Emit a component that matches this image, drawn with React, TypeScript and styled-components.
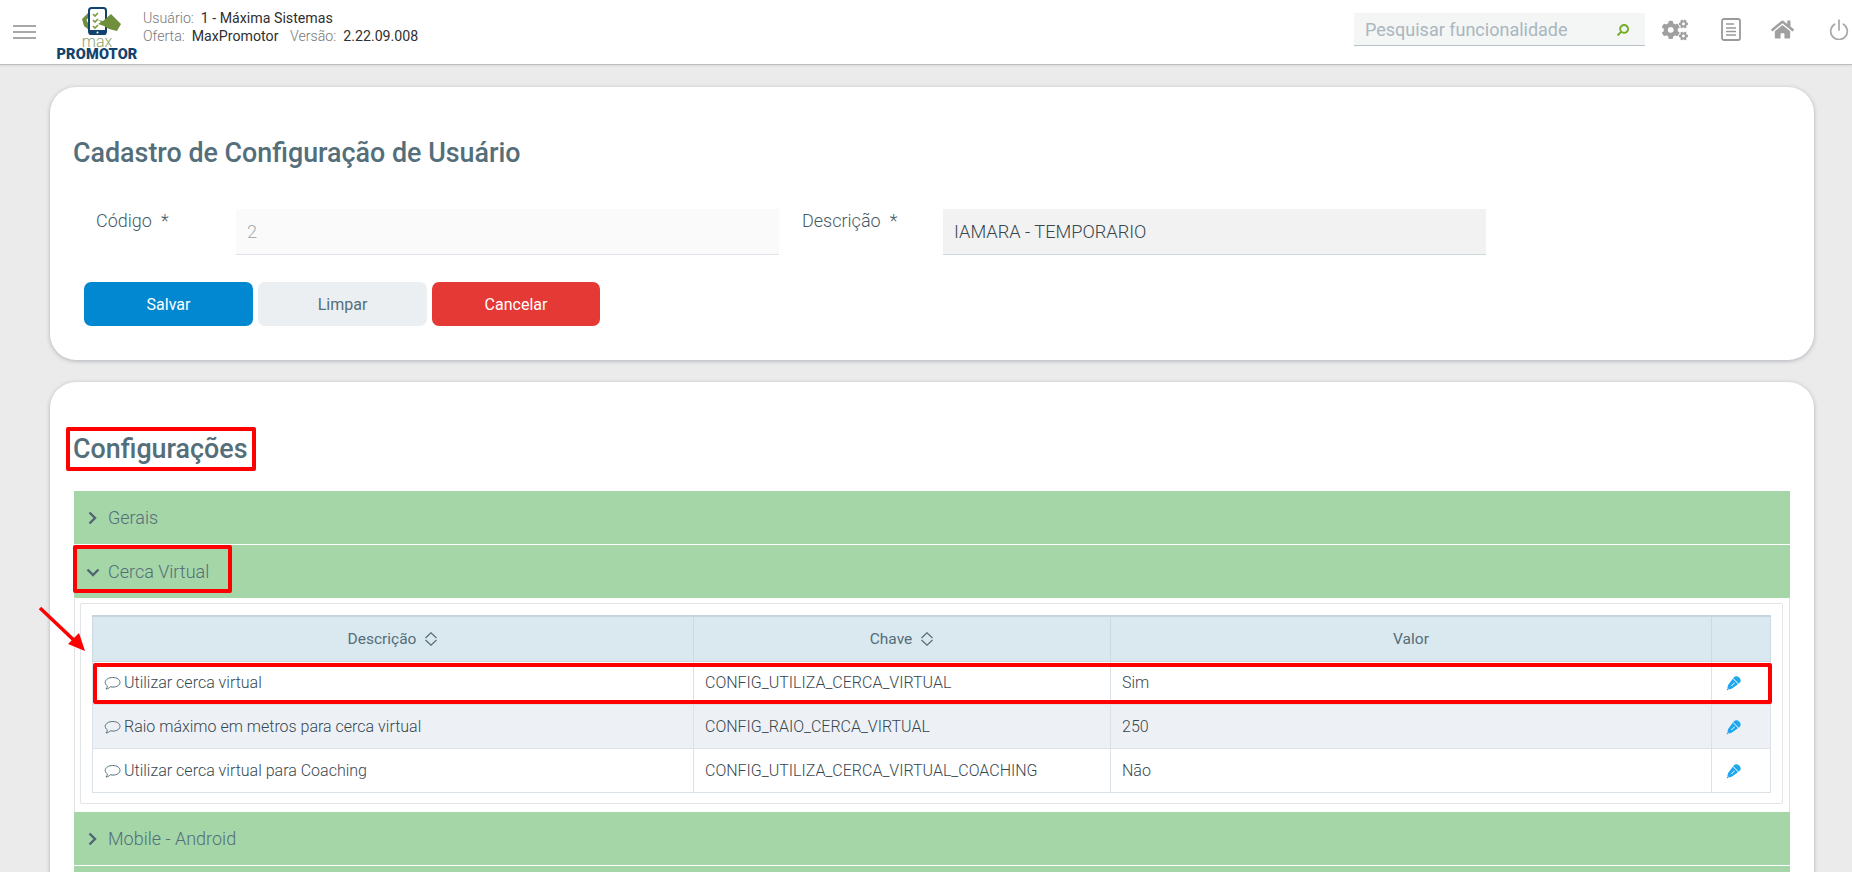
import React from "react";
import styled, { createGlobalStyle } from "styled-components";
import { FaCogs, FaHome, FaSearch } from "react-icons/fa";

const Global = createGlobalStyle`
  html, body { margin: 0; padding: 0; height: 872px; overflow: hidden; background: #ebebeb; }
  body { font-family: Roboto, "Liberation Sans", sans-serif; }
  * { box-sizing: border-box; }
`;

const Page = styled.div`
  position: relative;
  width: 1852px;
  height: 872px;
  overflow: hidden;
`;

const Topbar = styled.header`
  display: flex;
  align-items: center;
  height: 65px;
  background: #fff;
  border-bottom: 1px solid #bdbdbd;
  box-shadow: 0 1px 2px rgba(0, 0, 0, 0.08);
`;

const Burger = styled.div`
  display: flex;
  flex-direction: column;
  gap: 4px;
  width: 23px;
  margin-left: 13px;
  span { display: block; height: 2px; background: #a8a8a8; }
`;

const LogoBox = styled.div`
  display: flex;
  flex-direction: column;
  align-items: center;
  width: 82px;
  margin-left: 20px;
  height: 60px;
  padding-top: 5px;
  svg { margin-left: 8px; }
`;

const LogoMax = styled.span`
  font-size: 16px;
  line-height: 11px;
  font-weight: 300;
  color: #8fa36b;
  margin-top: 0;
`;

const LogoName = styled.span`
  font-size: 14.5px;
  line-height: 13px;
  font-weight: 900;
  letter-spacing: 0.2px;
  color: #12436d;
  margin-top: 1px;
`;

const UserInfo = styled.div`
  margin-left: 5px;
  font-size: 14.2px;
  line-height: 18px;
  color: #777;
  font-weight: 300;
  margin-top: -11px;
  b { font-weight: 400; color: #2f2f2f; margin-left: 3.5px; margin-right: 8px; }
`;

const Spacer = styled.div`
  flex: 1;
`;

const Search = styled.div`
  display: flex;
  align-items: center;
  justify-content: space-between;
  width: 291px;
  height: 33px;
  margin-top: -6px;
  padding: 2px 16px 0 11px;
  background: #f4f5f5;
  border-bottom: 1px solid #b4c2ca;
  font-size: 18px;
  color: #a9b7bf;
  svg { color: #74ad27; transform: scaleX(-1); }
`;

const TopIcons = styled.div`
  display: flex;
  align-items: center;
  margin-top: -5px;
  color: #a0a0a0;
`;

const IconSlot = styled.div<{ $w: number; $ml: number }>`
  display: flex;
  justify-content: center;
  width: ${(p) => p.$w}px;
  margin-left: ${(p) => p.$ml}px;
`;

const Main = styled.main`
  display: flex;
  flex-direction: column;
  gap: 22px;
  padding: 22px 38px 0 50px;
`;

const Card = styled.section`
  background: #fff;
  border-radius: 26px;
  box-shadow: 0 1px 4px rgba(60, 70, 90, 0.35);
`;

const FormCard = styled(Card)`
  height: 273px;
  padding: 51px 23px 0;
`;

const ConfigCard = styled(Card)`
  height: 600px;
  padding: 52px 24px 0 23px;
`;

const Title = styled.h2`
  margin: 0;
  font-size: 26.85px;
  line-height: 30px;
  font-weight: 500;
  color: #546e7a;
`;

const FormRow = styled.div`
  display: flex;
  margin-top: 41px;
`;

const Label = styled.label<{ $w: number }>`
  width: ${(p) => p.$w}px;
  padding-left: ${(p) => (p.$w > 150 ? 23 : 0)}px;
  padding-top: 1px;
  font-size: 18px;
  line-height: 22px;
  font-weight: 300;
  color: #455a64;
  span { margin-left: 9px; }
`;

const Input = styled.div<{ $disabled?: boolean }>`
  display: flex;
  align-items: center;
  width: 543px;
  height: 46px;
  padding: 0 11px;
  font-size: 18.2px;
  font-weight: 300;
  background: ${(p) => (p.$disabled ? "#fafafa" : "#f2f2f2")};
  border-bottom: 1px solid ${(p) => (p.$disabled ? "#dde3e8" : "#cfd8dc")};
  color: ${(p) => (p.$disabled ? "#a4adb2" : "#37474f")};
`;

const FieldGap = styled.div`
  width: 23px;
`;

const Buttons = styled.div`
  display: flex;
  gap: 5px;
  margin-top: 27px;
  margin-left: 11px;
`;

const Btn = styled.button<{ $bg: string; $fg: string }>`
  width: 169px;
  height: 44px;
  border: 0;
  border-radius: 7px;
  font: 400 16px Roboto, sans-serif;
  background: ${(p) => p.$bg};
  color: ${(p) => p.$fg};
  &:last-child { width: 168px; }
`;

const Accordion = styled.div`
  margin: 27px 0 0 1px;
  width: 1716px;
`;

const AccHeader = styled.div`
  display: flex;
  align-items: center;
  height: 53px;
  margin-bottom: 1px;
  padding-left: 12px;
  background: #a5d6a7;
  font-size: 18px;
  font-weight: 300;
  color: #546e7a;
  svg { margin-right: 8px; flex: none; }
`;

const AccContent = styled.div`
  margin-top: -2px;
  padding: 6px 6px 8px 5px;
  border-left: 1px solid #e2e2e2;
  border-right: 1px solid #e2e2e2;
`;

const TableBox = styled.div`
  padding: 11px 11px 10px;
  border: 1px solid #e2e5e7;
  border-radius: 2px;
`;

const Table = styled.table`
  width: 100%;
  table-layout: fixed;
  border-collapse: collapse;
  font-size: 16px;
  font-weight: 300;
`;

const Th = styled.th`
  height: 45px;
  padding: 0;
  background: #dae8ef;
  border: 1px solid #cbd9e1;
  border-top: 2px solid #c5d5de;
  font-size: 15.5px;
  font-weight: 400;
  color: #546e7a;
  text-align: center;
  svg { margin-left: 8px; vertical-align: -2px; }
`;

const Tr = styled.tr<{ $alt?: boolean }>`
  background: ${(p) => (p.$alt ? "#edf1f6" : "#fff")};
  &:last-child td { height: 44.5px; }
`;

const Td = styled.td`
  height: 43.6px;
  padding: 0 11px;
  border: 1px solid #dbe3e8;
  color: #37474f;
  white-space: nowrap;
  svg { vertical-align: -3px; }
`;

const ActionTd = styled(Td)`
  padding: 0 14px;
`;

const Box = styled.div`
  position: absolute;
  border: 4px solid #f00;
  border-radius: 2px;
  pointer-events: none;
`;

const ConfigMark = styled(Box)`
  left: 66px; top: 427px; width: 190px; height: 44px;
`;
const CercaMark = styled(Box)`
  left: 73px; top: 545px; width: 159px; height: 48px;
`;
const RowMark = styled(Box)`
  left: 93px; top: 663px; width: 1679px; height: 41px;
`;
const ArrowLayer = styled.svg`
  position: absolute;
  left: 36px; top: 604px;
`;

const Chevron = ({ open }: { open?: boolean }) => (
  <svg width="14" height="14" viewBox="0 0 14 14" fill="none" stroke="#4f6672" strokeWidth="2.4">
    {open ? <path d="M1.5 4.500 7 10l5.500-5.500" /> : <path d="M3.500 1.500 9 7l-5.500 5.500" />}
  </svg>
);

const Sort = () => (
  <svg width="14" height="14" viewBox="0 0 14 14" fill="none" stroke="#546e7a" strokeWidth="1.2">
    <path d="M1.5 6 7 .8 12.5 6M1.5 8 7 13.2 12.5 8" />
  </svg>
);

const Bubble = () => (
  <svg width="17" height="15" viewBox="0 0 17 15" fill="none" stroke="#546e7a" strokeWidth="1" style={{ marginRight: 3 }}>
    <path d="M8.8 1.5c4 0 7.2 2 7.2 4.8s-3.200 4.800-7.200 4.800c-.9 0-1.700-.1-2.500-.3-1 1.200-2.500 2-4.300 2.200.8-.8 1.300-1.800 1.400-3C2.100 9 1.200 7.700 1.200 6.300c0-2.800 3.600-4.800 7.600-4.800Z" />
  </svg>
);

const Pencil = () => (
  <svg width="15" height="15" viewBox="0 0 15 15">
    <path d="M7.500 1.700A4 4 0 0 1 13.300 7.300L6 12.500.6 14.400 2.300 8.800Z" fill="#1ea7ef" />
    <path d="M7 2.500 12.500 8" stroke="#fff" strokeWidth="1" fill="none" />
    <path d="M5.300 10 8.500 6.800" stroke="#fff" strokeWidth="1" fill="none" />
    <path d="M1.200 12 3 13.800" stroke="#fff" strokeWidth=".7" fill="none" />
  </svg>
);

const LogoMark = () => (
  <svg width="40" height="29" viewBox="0 0 40 29">
    <path d="M7 6 1 12l2 7 5 4V18L5.500 13 8 10Z" fill="#6f8f3c" />
    <rect x="8" y="1" width="17" height="26" rx="2.500" fill="#fff" stroke="#12436d" strokeWidth="2" />
    <path d="M8 23h17v3a2 2 0 0 1-2 2H10a2 2 0 0 1-2-2Z" fill="#12436d" />
    <circle cx="16.500" cy="25.500" r="1" fill="#fff" />
    <path d="M12 7l2 2 3-3M12 13l2 2 3-3M12 19l2 2 3-3" fill="none" stroke="#7b9a3f" strokeWidth="1.600" />
    <path d="M17 13l5 1 8-7 10 10-4 7-8-2-5-3-6-2 3-2Z" fill="#6f8f3c" />
  </svg>
);

const DocIcon = () => (
  <svg width="20" height="23" viewBox="0 0 20 23" fill="none" stroke="#9a9a9a" strokeWidth="1.800">
    <rect x="1" y="1" width="18" height="21" rx="2" />
    <path d="M5 6h8M5 10h10M5 13.500h10M5 17h10" strokeWidth="1.400" />
  </svg>
);

const PowerIcon = () => (
  <svg width="20" height="21" viewBox="0 0 20 21" fill="none" stroke="#a8a8a8" strokeWidth="1.700" strokeLinecap="round">
    <path d="M10 1v10M5.600 5.200a8.300 8.300 0 1 0 8.800 0" />
  </svg>
);

const rows = [
  ["Utilizar cerca virtual", "CONFIG_UTILIZA_CERCA_VIRTUAL", "Sim"],
  ["Raio máximo em metros para cerca virtual", "CONFIG_RAIO_CERCA_VIRTUAL", "250"],
  ["Utilizar cerca virtual para Coaching", "CONFIG_UTILIZA_CERCA_VIRTUAL_COACHING", "Não"],
];

export default function App() {
  return (
    <Page>
      <Global />
      <Topbar>
        <Burger><span /><span /><span /></Burger>
        <LogoBox>
          <LogoMark />
          <LogoMax>max</LogoMax>
          <LogoName>PROMOTOR</LogoName>
        </LogoBox>
        <UserInfo>
          <div>Usuário: <b>1 - Máxima Sistemas</b></div>
          <div>Oferta: <b>MaxPromotor</b> Versão: <b>2.22.09.008</b></div>
        </UserInfo>
        <Spacer />
        <Search>
          Pesquisar funcionalidade
          <FaSearch size={12} />
        </Search>
        <TopIcons>
          <IconSlot $w={26} $ml={17}><FaCogs size={26} /></IconSlot>
          <IconSlot $w={20} $ml={33}><DocIcon /></IconSlot>
          <IconSlot $w={24} $ml={29}><FaHome size={23} /></IconSlot>
          <IconSlot $w={20} $ml={35}><PowerIcon /></IconSlot>
        </TopIcons>
        <IconSlot $w={3} $ml={0} />
      </Topbar>
      <Main>
        <FormCard>
          <Title>Cadastro de Configuração de Usuário</Title>
          <FormRow>
            <Label $w={163}>Código<span>*</span></Label>
            <Input $disabled>2</Input>
            <FieldGap />
            <Label $w={141}>Descrição<span>*</span></Label>
            <Input>IAMARA - TEMPORARIO</Input>
          </FormRow>
          <Buttons>
            <Btn $bg="#0288d1" $fg="#fff">Salvar</Btn>
            <Btn $bg="#eceff1" $fg="#546e7a">Limpar</Btn>
            <Btn $bg="#e53935" $fg="#fff">Cancelar</Btn>
          </Buttons>
        </FormCard>
        <ConfigCard>
          <Title>Configurações</Title>
          <Accordion>
            <AccHeader><Chevron />Gerais</AccHeader>
            <AccHeader><Chevron open />Cerca Virtual</AccHeader>
            <AccContent>
              <TableBox>
                <Table>
                  <colgroup>
                    <col style={{ width: 601 }} />
                    <col style={{ width: 417 }} />
                    <col style={{ width: 601 }} />
                    <col />
                  </colgroup>
                  <thead>
                    <tr>
                      <Th>Descrição<Sort /></Th>
                      <Th>Chave<Sort /></Th>
                      <Th>Valor</Th>
                      <Th />
                    </tr>
                  </thead>
                  <tbody>
                    {rows.map((r, i) => (
                      <Tr key={r[1]} $alt={i === 1}>
                        <Td><Bubble />{r[0]}</Td>
                        <Td>{r[1]}</Td>
                        <Td>{r[2]}</Td>
                        <ActionTd><Pencil /></ActionTd>
                      </Tr>
                    ))}
                  </tbody>
                </Table>
              </TableBox>
            </AccContent>
            <AccHeader><Chevron />Mobile - Android</AccHeader>
            <AccHeader />
          </Accordion>
        </ConfigCard>
      </Main>
      <ConfigMark />
      <CercaMark />
      <RowMark />
      <ArrowLayer width="52" height="50" viewBox="0 0 52 50">
        <path d="M4 4 42 40" stroke="#f00" strokeWidth="3.500" />
        <path d="M49 47 32 40 43 29Z" fill="#f00" />
      </ArrowLayer>
    </Page>
  );
}
